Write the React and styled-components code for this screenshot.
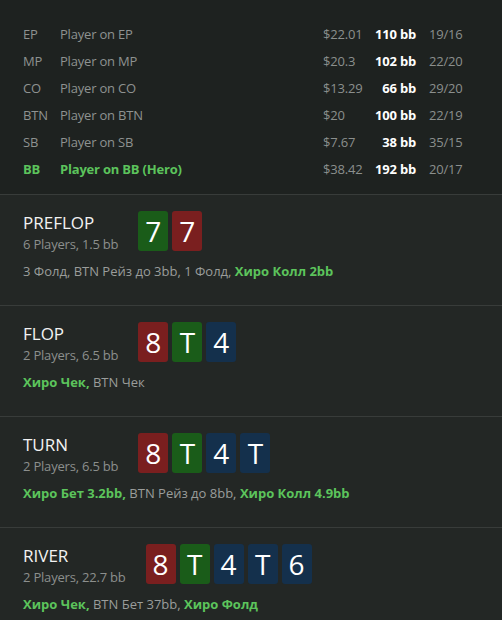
import React from 'react';
import styled, { createGlobalStyle } from 'styled-components';

const GlobalStyle = createGlobalStyle`
  body {
    margin: 0;
    background: #232725;
    font-family: 'Open Sans', 'Noto Sans', sans-serif;
    -webkit-font-smoothing: antialiased;
  }
`;

const Page = styled.div`
  width: 502px;
  min-height: 620px;
  background: #232725;
  overflow: hidden;
`;

const Players = styled.div`
  background: #1e2220;
  padding: 20px 13px 12px 23px;
  border-bottom: 1px solid #383c3a;
`;

const PlayerRow = styled.div`
  display: grid;
  grid-template-columns: 37px 1fr 44px 49px 73px;
  height: 27px;
  align-items: center;
  font-size: 13px;
  letter-spacing: -0.2px;
  color: ${(p) => (p.hero ? '#5cc45c' : '#8e9290')};
  font-weight: ${(p) => (p.hero ? 700 : 400)};
`;

const Money = styled.span`
  color: #8b8f8d;
  font-weight: 400;
`;

const Stack = styled.span`
  color: #ffffff;
  font-weight: 700;
  text-align: right;
`;

const Ratio = styled.span`
  color: #8b8f8d;
  font-weight: 400;
  padding-left: 13px;
`;

const Street = styled.section`
  padding: 16px 23px 25px;
  border-bottom: 1px solid #383c3a;
`;

const StreetHead = styled.div`
  display: flex;
  align-items: flex-start;
  gap: 20px;
  height: 40px;
`;

const TitleBlock = styled.div`
  display: flex;
  flex-direction: column;
`;

const Title = styled.div`
  color: #f2f2f2;
  font-size: 17px;
  line-height: 24px;
`;

const Sub = styled.div`
  color: #8c8f8d;
  font-size: 13px;
  line-height: 18px;
  letter-spacing: -0.2px;
`;

const Cards = styled.div`
  display: flex;
  gap: 4px;
`;

const Card = styled.div`
  width: 30px;
  height: 40px;
  border-radius: 3px;
  background: ${(p) => ({ r: '#7a1f1f', g: '#1a5c19', b: '#14304c' }[p.suit])};
  color: #ffffff;
  font-size: 28px;
  line-height: 40px;
  text-align: center;
`;

const Actions = styled.div`
  margin-top: 11px;
  font-size: 13px;
  line-height: 18px;
  color: #9a9d9b;
`;

const Hero = styled.span`
  color: #5cc45c;
  font-weight: 700;
`;

const players = [
  ['EP', 'Player on EP', '$22.01', '110 bb', '19/16'],
  ['MP', 'Player on MP', '$20.3', '102 bb', '22/20'],
  ['CO', 'Player on CO', '$13.29', '66 bb', '29/20'],
  ['BTN', 'Player on BTN', '$20', '100 bb', '22/19'],
  ['SB', 'Player on SB', '$7.67', '38 bb', '35/15'],
  ['BB', 'Player on BB (Hero)', '$38.42', '192 bb', '20/17', true],
];

// action parts: [text, isHero]
const streets = [
  {
    name: 'PREFLOP',
    sub: '6 Players, 1.5 bb',
    cards: [['7', 'g'], ['7', 'r']],
    actions: [['3 Фолд, BTN Рейз до 3bb, 1 Фолд, '], ['Хиро Колл 2bb', true]],
  },
  {
    name: 'FLOP',
    sub: '2 Players, 6.5 bb',
    cards: [['8', 'r'], ['T', 'g'], ['4', 'b']],
    actions: [['Хиро Чек,', true], [' BTN Чек']],
  },
  {
    name: 'TURN',
    sub: '2 Players, 6.5 bb',
    cards: [['8', 'r'], ['T', 'g'], ['4', 'b'], ['T', 'b']],
    actions: [['Хиро Бет 3.2bb,', true], [' BTN Рейз до 8bb, '], ['Хиро Колл 4.9bb', true]],
  },
  {
    name: 'RIVER',
    sub: '2 Players, 22.7 bb',
    cards: [['8', 'r'], ['T', 'g'], ['4', 'b'], ['T', 'b'], ['6', 'b']],
    actions: [['Хиро Чек,', true], [' BTN Бет 37bb, '], ['Хиро Фолд', true]],
  },
];

export default function App() {
  return (
    <Page>
      <GlobalStyle />
      <Players>
        {players.map(([pos, name, money, stack, ratio, hero]) => (
          <PlayerRow key={pos} hero={hero}>
            <span>{pos}</span>
            <span>{name}</span>
            <Money>{money}</Money>
            <Stack>{stack}</Stack>
            <Ratio>{ratio}</Ratio>
          </PlayerRow>
        ))}
      </Players>
      {streets.map((s) => (
        <Street key={s.name}>
          <StreetHead>
            <TitleBlock>
              <Title>{s.name}</Title>
              <Sub>{s.sub}</Sub>
            </TitleBlock>
            <Cards>
              {s.cards.map(([rank, suit], i) => (
                <Card key={i} suit={suit}>{rank}</Card>
              ))}
            </Cards>
          </StreetHead>
          <Actions>
            {s.actions.map(([text, hero], i) =>
              hero ? <Hero key={i}>{text}</Hero> : <span key={i}>{text}</span>
            )}
          </Actions>
        </Street>
      ))}
    </Page>
  );
}
